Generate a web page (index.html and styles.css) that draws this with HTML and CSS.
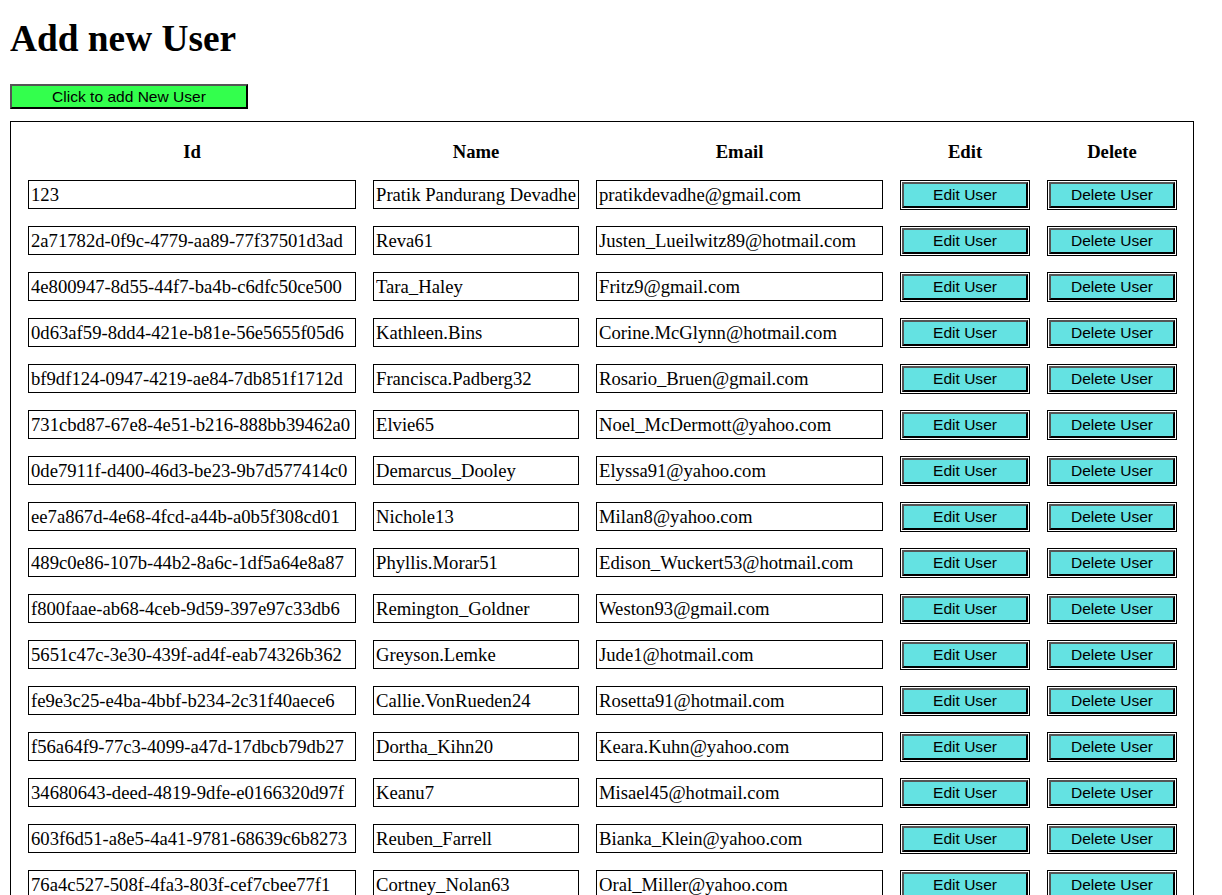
FILE: index.html
```html
<!DOCTYPE html>
<html>
<head>
<meta charset="utf-8">
<title>Users</title>
<link rel="stylesheet" href="styles.css">
</head>
<body>
<h1 class="title">Add new User</h1>
<button class="add-btn">Click to add New User</button>
<div class="users">
  <div class="row head">
    <div class="th">Id</div>
    <div class="th">Name</div>
    <div class="th">Email</div>
    <div class="th">Edit</div>
    <div class="th">Delete</div>
  </div>
  <div class="row"><input class="field" value="123"><input class="field" value="Pratik Pandurang Devadhe"><input class="field" value="pratikdevadhe@gmail.com"><button class="act">Edit User</button><button class="act">Delete User</button></div>
  <div class="row"><input class="field" value="2a71782d-0f9c-4779-aa89-77f37501d3ad"><input class="field" value="Reva61"><input class="field" value="Justen_Lueilwitz89@hotmail.com"><button class="act">Edit User</button><button class="act">Delete User</button></div>
  <div class="row"><input class="field" value="4e800947-8d55-44f7-ba4b-c6dfc50ce500"><input class="field" value="Tara_Haley"><input class="field" value="Fritz9@gmail.com"><button class="act">Edit User</button><button class="act">Delete User</button></div>
  <div class="row"><input class="field" value="0d63af59-8dd4-421e-b81e-56e5655f05d6"><input class="field" value="Kathleen.Bins"><input class="field" value="Corine.McGlynn@hotmail.com"><button class="act">Edit User</button><button class="act">Delete User</button></div>
  <div class="row"><input class="field" value="bf9df124-0947-4219-ae84-7db851f1712d"><input class="field" value="Francisca.Padberg32"><input class="field" value="Rosario_Bruen@gmail.com"><button class="act">Edit User</button><button class="act">Delete User</button></div>
  <div class="row"><input class="field" value="731cbd87-67e8-4e51-b216-888bb39462a0"><input class="field" value="Elvie65"><input class="field" value="Noel_McDermott@yahoo.com"><button class="act">Edit User</button><button class="act">Delete User</button></div>
  <div class="row"><input class="field" value="0de7911f-d400-46d3-be23-9b7d577414c0"><input class="field" value="Demarcus_Dooley"><input class="field" value="Elyssa91@yahoo.com"><button class="act">Edit User</button><button class="act">Delete User</button></div>
  <div class="row"><input class="field" value="ee7a867d-4e68-4fcd-a44b-a0b5f308cd01"><input class="field" value="Nichole13"><input class="field" value="Milan8@yahoo.com"><button class="act">Edit User</button><button class="act">Delete User</button></div>
  <div class="row"><input class="field" value="489c0e86-107b-44b2-8a6c-1df5a64e8a87"><input class="field" value="Phyllis.Morar51"><input class="field" value="Edison_Wuckert53@hotmail.com"><button class="act">Edit User</button><button class="act">Delete User</button></div>
  <div class="row"><input class="field" value="f800faae-ab68-4ceb-9d59-397e97c33db6"><input class="field" value="Remington_Goldner"><input class="field" value="Weston93@gmail.com"><button class="act">Edit User</button><button class="act">Delete User</button></div>
  <div class="row"><input class="field" value="5651c47c-3e30-439f-ad4f-eab74326b362"><input class="field" value="Greyson.Lemke"><input class="field" value="Jude1@hotmail.com"><button class="act">Edit User</button><button class="act">Delete User</button></div>
  <div class="row"><input class="field" value="fe9e3c25-e4ba-4bbf-b234-2c31f40aece6"><input class="field" value="Callie.VonRueden24"><input class="field" value="Rosetta91@hotmail.com"><button class="act">Edit User</button><button class="act">Delete User</button></div>
  <div class="row"><input class="field" value="f56a64f9-77c3-4099-a47d-17dbcb79db27"><input class="field" value="Dortha_Kihn20"><input class="field" value="Keara.Kuhn@yahoo.com"><button class="act">Edit User</button><button class="act">Delete User</button></div>
  <div class="row"><input class="field" value="34680643-deed-4819-9dfe-e0166320d97f"><input class="field" value="Keanu7"><input class="field" value="Misael45@hotmail.com"><button class="act">Edit User</button><button class="act">Delete User</button></div>
  <div class="row"><input class="field" value="603f6d51-a8e5-4a41-9781-68639c6b8273"><input class="field" value="Reuben_Farrell"><input class="field" value="Bianka_Klein@yahoo.com"><button class="act">Edit User</button><button class="act">Delete User</button></div>
  <div class="row"><input class="field" value="76a4c527-508f-4fa3-803f-cef7cbee77f1"><input class="field" value="Cortney_Nolan63"><input class="field" value="Oral_Miller@yahoo.com"><button class="act">Edit User</button><button class="act">Delete User</button></div>
</div>
</body>
</html>
```
FILE: styles.css
```css
html, body {
  background: #fff;
}
body {
  margin: 0 10px;
  padding: 0;
  font-family: "Liberation Serif", "Times New Roman", serif;
  color: #000;
}
.title {
  margin: 0;
  padding-top: 17px;
  font-size: 37.33px;
  line-height: 43px;
  font-weight: bold;
  height: 43px;
}
.add-btn {
  display: block;
  margin: 24px 0 0;
  width: 238px;
  height: 25px;
  padding: 0;
  background: #33ff4d;
  border-style: solid;
  border-width: 2px;
  border-color: #555 #000 #000 #555;
  font-family: "Liberation Sans", Arial, sans-serif;
  font-size: 15.56px;
  color: #000;
}
.users {
  margin-top: 12px;
  width: 1184px;
  box-sizing: border-box;
  border: 1px solid #000;
  padding: 17px 16px 20px 17px;
  display: flex;
  flex-direction: column;
  gap: 16px;
}
.row {
  display: grid;
  grid-template-columns: 328px 206px 287px 130px 130px;
  column-gap: 17px;
  align-items: start;
  height: 30px;
}
.head {
  height: 25px;
  align-items: center;
}
.th {
  text-align: center;
  font-weight: bold;
  font-size: 18.67px;
  line-height: 25px;
}
.field {
  box-sizing: border-box;
  width: 100%;
  height: 29px;
  margin: 0;
  padding: 0 2px;
  border: 1px solid #000;
  font-family: "Liberation Serif", "Times New Roman", serif;
  font-size: 18.67px;
  color: #000;
  background: #fff;
  outline: none;
}
.act {
  box-sizing: border-box;
  margin: 2px;
  width: 126px;
  height: 26px;
  padding: 0;
  background: #64e2e2;
  border-style: solid;
  border-width: 2px;
  border-color: #555 #000 #000 #555;
  box-shadow: 0 0 0 1px #fff, 0 0 0 2px #000;
  font-family: "Liberation Sans", Arial, sans-serif;
  font-size: 15.56px;
  color: #000;
}
```
